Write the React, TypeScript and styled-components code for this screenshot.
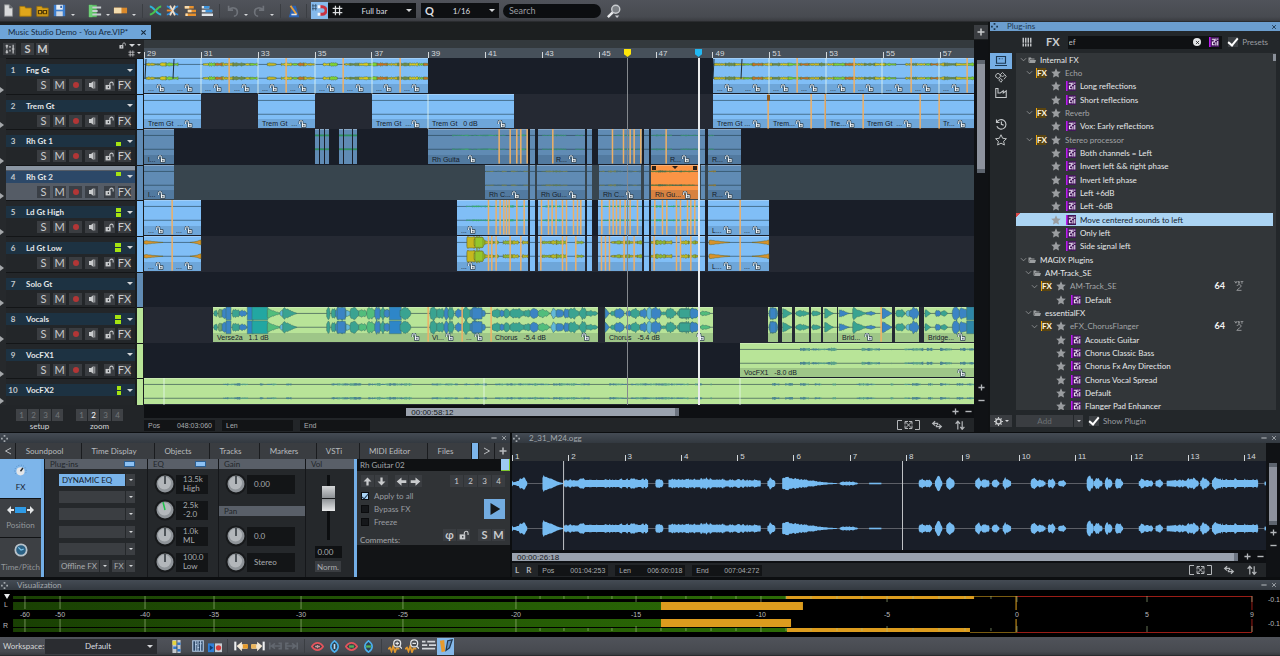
import React from "react";
import styled, { createGlobalStyle, css } from "styled-components";

const UI = `Lato, "Open Sans", sans-serif`;
const ARIAL = `"Liberation Sans", Arial, sans-serif`;

const Global = createGlobalStyle`
  * { box-sizing: border-box; }
  body { margin: 0; background: #17191c; font-family: ${UI}; font-size: 8px; line-height: 10px; color: #d4d6d8; }
  button, input, select, textarea { font: inherit; color: inherit; margin: 0; padding: 0; border: 0; background: none; border-radius: 0; outline: none; }
  ul, h2 { margin: 0; padding: 0; list-style: none; font-size: 8px; font-weight: 400; }
  svg { display: block; flex: none; }
`;

/* ---------- wave drawing ---------- */

type Shape = "o" | "d" | "g" | "b" | "n";
type Blob = [number, number, number, string, Shape?];

function noise(n: number) {
  const s = Math.sin(n * 127.1 + 11.7) * 43758.5453;
  return s - Math.floor(s);
}

function envelope(shape: Shape, t: number) {
  if (shape === "d") return Math.pow(1 - t, 1.2) * Math.min(1, 0.7 + t * 6) + 0.05;
  if (shape === "g") return Math.pow(t, 1.5) + 0.05;
  if (shape === "b") return 1;
  if (shape === "n") return 0.85;
  return Math.pow(Math.sin(Math.PI * Math.min(0.97, Math.max(0.06, Math.pow(t, 0.8)))), 0.5);
}

function blobPath(b: Blob, cy: number, step: number) {
  const [x0, x1, amp, , shape = "o"] = b;
  const count = Math.max(4, Math.round((x1 - x0) / step));
  const up: string[] = [];
  const down: string[] = [];
  for (let i = 0; i <= count; i++) {
    const x = x0 + ((x1 - x0) * i) / count;
    const rough = shape === "b" ? 1 : shape === "n" ? 0.45 + 0.7 * noise(x) : shape === "o" ? 0.6 + 0.5 * noise(x) : 0.75 + 0.3 * noise(x);
    const a = amp * envelope(shape, i / count) * rough;
    up.push(`${x.toFixed(1)} ${(cy - a).toFixed(1)}`);
    down.unshift(`${x.toFixed(1)} ${(cy + a).toFixed(1)}`);
  }
  return `M${up.join("L")}L${down.join("L")}Z`;
}

function Waves({ blobs, centres, step = 1, stroke }: { blobs: Blob[]; centres: number[]; step?: number; stroke?: string }) {
  return (
    <>
      {blobs.map((b, i) =>
        centres.map((c) => (
          <path key={`${i}-${c}`} d={blobPath(b, c, step)} fill={b[3]} stroke={stroke} strokeWidth={stroke ? 0.5 : 0} />
        ))
      )}
    </>
  );
}

/* ---------- icons ---------- */

const S = { fill: "none", stroke: "currentColor" } as const;

const icons: Record<string, React.ReactNode> = {
  file: <path d="M3 1h6l4 4v10H3z M9 1v4h4" fill="#d9dadb" stroke="#8a8c8f" />,
  folder: <path d="M1 3h6l1 2h7v10H1z" fill="#dfa61b" stroke="#a87a0c" />,
  folderRev: (
    <>
      <path d="M1 3h6l1 2h7v10H1z" fill="#d8a11a" stroke="#a0740a" />
      <path d="M3 8h4v4H3z M9 8h4v4H9z M7 10h2" fill="none" stroke="#4d3806" strokeWidth="1.4" />
    </>
  ),
  save: (
    <>
      <path d="M1 1h14v14H1z" fill="#3d7fd0" />
      <path d="M4 1h8v6H4z" fill="#e9edf2" />
      <path d="M4 9h8v6H4z" fill="#cdd6e2" />
      <path d="M9 2h2v3H9z" fill="#2a5ea6" />
    </>
  ),
  track: (
    <>
      <path d="M1 1h9v14H1z" fill="#54b85c" />
      <path d="M3 4h12M3 8h8M3 12h12" stroke="#c6ccd0" strokeWidth="2.4" />
      <path d="M1 1h4v14H1z" fill="#6ed076" />
    </>
  ),
  bar: (
    <>
      <path d="M1 5h14v6H1z" fill="#d9882a" />
      <path d="M1 5h8v6H1z" fill="#f3dcae" />
    </>
  ),
  cross: (
    <>
      <path d="M1 3c5 0 8 10 14 10" fill="none" stroke="#2fb3d8" strokeWidth="2.4" />
      <path d="M1 13c6 0 9-10 14-10" fill="none" stroke="#49c34f" strokeWidth="2.4" />
    </>
  ),
  crossCut: (
    <>
      <path d="M1 3c5 0 8 10 14 10 M1 13c6 0 9-10 14-10" fill="none" stroke="#2f8fe0" strokeWidth="2.2" />
      <path d="M5 2l6 12M11 2L5 14" stroke="#efdcc6" strokeWidth="2.2" />
      <path d="M1 8h6" stroke="#f08b2c" strokeWidth="2.2" />
    </>
  ),
  linesO: (
    <>
      <path d="M1 3h12M5 8h11M2 13h14" stroke="#e8912d" strokeWidth="3.6" />
      <path d="M1 3h6M5 8h5M2 13h3" stroke="#f6dcb0" strokeWidth="3.6" />
    </>
  ),
  linesB: (
    <>
      <path d="M1 3h10M1 8h14M1 13h15" stroke="#dfe4e8" strokeWidth="3.2" />
      <path d="M4 3h7M6 8h9" stroke="#3c94dd" strokeWidth="3.2" />
    </>
  ),
  undo: <path d="M3 2v5h5M3 7c3-4 10-3 10 2 0 3-2 5-4 5" {...S} stroke="#6f737a" strokeWidth="1.9" />,
  redo: <path d="M13 2v5H8M13 7C10 3 3 4 3 9c0 3 2 5 4 5" {...S} stroke="#6f737a" strokeWidth="1.9" />,
  metro: (
    <>
      <path d="M6 2h4l4 13H2z" fill="#2c63b4" />
      <path d="M4 2l7 10" stroke="#e7a03a" strokeWidth="2.2" />
      <path d="M5 12h6" stroke="#e3e6ea" strokeWidth="1.8" />
    </>
  ),
  magnet: (
    <>
      <path d="M8 4h3a4 4 0 0 1 0 8H8" fill="none" stroke="#c8313f" strokeWidth="3" />
      <path d="M6 4h3M6 12h3" stroke="#f4f6f8" strokeWidth="3" />
      <path d="M0 3h5M0 6h5M1 1v7M4 1v7" stroke="#38536e" strokeWidth="0.9" />
    </>
  ),
  hash: <path d="M5 1v14M11 1v14M1 5h14M1 11h14" {...S} strokeWidth="1.8" />,
  search: (
    <>
      <circle cx="10" cy="6" r="4.600" fill="#7c8085" stroke="#c9ccd0" strokeWidth="1.6" />
      <path d="M6.500 9.500L1 15" stroke="#e9ebed" strokeWidth="2.800" />
      <path d="M9 13h5l-2.500 3z" fill="#c9ccd0" />
    </>
  ),
  mixer: <path d="M3 1v6M3 9v6M8 3v3M8 9v3M13 1v14M1 3h4M1 13h4M11 8h4" {...S} strokeWidth="1.9" />,
  sliders: <path d="M2 1v14M6 1v14M10 1v14M14 1v14" {...S} strokeWidth="2.2" strokeDasharray="8 1.5 6" />,
  preset: (
    <>
      <path d="M0 0h16v16H0z" fill="#43175a" />
      <path d="M0 0h2.500v16H0z" fill="#bb1cf0" />
      <path d="M4.500 3.500h4v4.500h-3v4.500h3.500M11 2.500v4M11 8.500v5M14 2.500v2M14 6.500v7" stroke="#f0e4f6" strokeWidth="1.700" fill="none" />
    </>
  ),
  laptop: <path d="M2 2h12v9H2zM0 14h16M5 5h2M9 5h1" {...S} strokeWidth="1.5" />,
  cubes: <path d="M1 5l3-2 3 2v3l-3 2-3-2zM7 5l3-3 3 3-3 3zM5 12l2-2 3 2-2 3zM13 5l2 2-3 4" {...S} strokeWidth="1.2" />,
  factory: <path d="M1 2v12h14V5l-4 3V5L7 8H4V2z" {...S} strokeWidth="1.4" />,
  clock: <path d="M2 2v4h4M2.500 6a6.300 6.300 0 1 1 0 5M8.500 4.500v4l3 1" {...S} strokeWidth="1.500" />,
  starO: <path d="M8 1l2.200 4.700 5 .6-3.700 3.400 1 5L8 12.200 3.500 14.700l1-5L.8 6.300l5-.6z" {...S} strokeWidth="1.3" />,
  star: <path d="M8 .5l2.300 4.900 5.400.6-4 3.700 1.100 5.500L8 12.600 3.200 15.200l1.100-5.500L.3 6l5.400-.6z" fill="#9a9da0" />,
  chevron: <path d="M2 5l6 6 6-6" {...S} strokeWidth="1.8" />,
  dir: <path d="M1 3h5l1 2h6v2H4L1 14zM4 8h12l-2 6H2z" fill="#9b9ea0" />,
  gear: (
    <>
      <circle cx="8" cy="8" r="4.500" {...S} strokeWidth="2.6" />
      <path d="M8 0v3M8 13v3M0 8h3M13 8h3M2.500 2.500l2 2M11.500 11.500l2 2M13.500 2.500l-2 2M4.500 11.500l-2 2" {...S} strokeWidth="2" />
    </>
  ),
  vst: <path d="M1 0l2 3.500L5 0M9 .5H6.500V2H9v1.500H6.500M10.500 .5H15M12.700 .5v4M4.500 8c1-3 7-3 7 0 0 2-5 4-7 7h7.500" {...S} strokeWidth="1.300" />,
  speaker: (
    <>
      <path d="M2 4h4v8H2zM6 4l5-4v16l-5-4z" fill="currentColor" />
      <path d="M13.500 1v14" {...S} strokeWidth="1.6" />
    </>
  ),
  lock: (
    <>
      <path d="M1 7h9v8H1z" fill="currentColor" />
      <path d="M8.500 7V5a3 3 0 0 1 6 0v3" {...S} strokeWidth="1.8" />
      <path d="M5 9.500h2v3H5z" fill="#34383c" />
    </>
  ),
  clipLock: (
    <>
      <path d="M2 8V4.500a3 3 0 0 1 6 0V8" fill="none" stroke="#33495a" strokeWidth="3.800" />
      <path d="M6 7h9v8H6z" fill="#f2f7fa" stroke="#2a3c4a" strokeWidth="1.500" />
      <path d="M2 8V4.500a3 3 0 0 1 6 0V8" fill="none" stroke="#f2f7fa" strokeWidth="1.800" />
      <path d="M9.500 9.500h2.500V13H9.500z" fill="#2a3c4a" />
    </>
  ),
  grip: <path d="M6 0h4v4H6zM6 12h4v4H6zM0 6h4v4H0zM12 6h4v4h-4z" fill="currentColor" />,
  plus: <path d="M8 1v14M1 8h14" {...S} strokeWidth="3" />,
  minus: <path d="M1 8h14" {...S} strokeWidth="3.200" />,
  close: <path d="M3 3l10 10M13 3L3 13" {...S} strokeWidth="2.400" />,
  less: <path d="M14 2L3 8l11 6" {...S} strokeWidth="2" />,
  more: <path d="M2 2l11 6-11 6" {...S} strokeWidth="2" />,
  up: <path d="M8 1l7 7h-5v7H6V8H1z" fill="currentColor" />,
  down: <path d="M8 15l7-7h-5V1H6v7H1z" fill="currentColor" />,
  left: <path d="M1 8l7-6v4h7v4H8v4z" fill="currentColor" />,
  right: <path d="M15 8L8 2v4H1v4h7v4z" fill="currentColor" />,
  play: <path d="M2 0l13 8-13 8z" fill="#15181b" />,
  fitH: <path d="M5 2L1 5.500 5 9M1 5.500h8v3M11 7l4 3.500-4 3.500M15 10.500H7v-3" {...S} strokeWidth="1.900" />,
  fitV: <path d="M1 6l3.500-4L8 6M4.500 2v13M8.500 11l3 4 3.500-4M11.500 15V2" {...S} strokeWidth="1.900" />,
  pitch: (
    <>
      <circle cx="8" cy="8" r="6.500" fill="#2b6184" stroke="#b9c3cb" strokeWidth="2" />
      <path d="M5 5l3 3 3-1" stroke="#79c0e8" fill="none" strokeWidth="1.4" />
    </>
  ),
  fxKnob: (
    <>
      <circle cx="8" cy="9" r="5" fill="#e3e5e7" />
      <path d="M8 9l3-4" stroke="#22272b" strokeWidth="1.800" />
      <path d="M2 12A7 7 0 1 1 14 12" fill="none" stroke="#4a7fb4" strokeDasharray="1 2" />
    </>
  ),
  wsA: (
    <>
      <path d="M3 0h10v16H3z" fill="#c2c7cc" />
      <path d="M3 1h5v5H3z" fill="#e7d63d" />
      <path d="M4 8h5v3H4zM9 3h4v3H9zM9 11h4v3H9z" fill="#2f79cf" />
      <path d="M8.500 0v16" stroke="#3c4248" />
    </>
  ),
  wsB: <path d="M1 1h14v14H1zM5 1v14M8 1v14M11.500 1v14M4 6h2.500M7 10h2.500M10 5h3" fill="#2b4564" stroke="#b4cbe6" strokeWidth="1.5" />,
  wsC: (
    <>
      <path d="M0 5h7v10H0z" fill="#2f7fd8" />
      <path d="M8 5h8v10H8z" fill="#c7ccd2" />
      <path d="M2 7l4 3-4 3z" fill="#0e3b70" />
      <circle cx="12" cy="10" r="3" fill="#d83a3a" />
    </>
  ),
  prev: (
    <>
      <path d="M1.500 3v10" stroke="#eceef0" strokeWidth="2.400" />
      <path d="M3 8l6-5v3h6v5H9v3z" fill="#f3e9d6" />
      <path d="M10 6h6v5h-6z" fill="#e39a2c" />
    </>
  ),
  next: (
    <>
      <path d="M14.500 3v10" stroke="#eceef0" strokeWidth="2.400" />
      <path d="M13 8L7 3v3H1v5h6v3z" fill="#f3e9d6" />
      <path d="M0 6h6v5H0z" fill="#e9b45c" />
    </>
  ),
  prevOff: <path d="M2 4v8M4 8h11M8 5L4 8l4 3M12 5h3v6h-3" stroke="#62676f" strokeWidth="1.800" fill="none" />,
  nextOff: <path d="M14 4v8M12 8H1M8 5l4 3-4 3M4 5H1v6h3" stroke="#62676f" strokeWidth="1.800" fill="none" />,
  eyeR: (
    <>
      <path d="M1 8c4-6 10-6 14 0-4 6-10 6-14 0z" fill="#3d4147" stroke="#e4545c" strokeWidth="2" />
      <path d="M5 8h6M8 6v4" stroke="#c9969a" strokeWidth="1.600" />
    </>
  ),
  eyeB: (
    <>
      <path d="M8 1c6 4 6 10 0 14C2 11 2 5 8 1z" fill="#2e3f4e" stroke="#4bb0ee" strokeWidth="2" />
      <path d="M8 5v6" stroke="#bfe1f6" strokeWidth="2" />
    </>
  ),
  eyeRG: (
    <>
      <path d="M1 8c4-6 10-6 14 0-4 6-10 6-14 0z" fill="#3d4147" stroke="#e4545c" strokeWidth="2" />
      <path d="M5 8h6" stroke="#54b35a" strokeWidth="2.800" />
    </>
  ),
  eyeBG: (
    <>
      <path d="M8 1c6 4 6 10 0 14C2 11 2 5 8 1z" fill="#2e3f4e" stroke="#4bb0ee" strokeWidth="2" />
      <path d="M5 8h6" stroke="#54b35a" strokeWidth="2.800" />
    </>
  ),
  zoomIn: (
    <>
      <path d="M0 11h2V9l2 5 2-6 2 7 2-5v1h3" stroke="#e0982f" strokeWidth="1.900" fill="none" />
      <circle cx="10.500" cy="5" r="4" fill="#4a4d53" stroke="#e4e6e8" strokeWidth="1.400" />
      <path d="M8.500 5h4M10.500 3v4M13 8l3 3" stroke="#e4e6e8" strokeWidth="1.300" />
    </>
  ),
  zoomOut: (
    <>
      <path d="M0 11h2V9l2 5 2-6 2 7 2-5v1h3" stroke="#e0982f" strokeWidth="1.900" fill="none" />
      <circle cx="10.500" cy="5" r="4" fill="#4a4d53" stroke="#e4e6e8" strokeWidth="1.400" />
      <path d="M8.500 5h4M13 8l3 3" stroke="#e4e6e8" strokeWidth="1.300" />
    </>
  ),
  rows: <path d="M0 3h4M6 3h9M0 7h6M8 7h8M0 11h15" stroke="#d2d5d8" strokeWidth="1.800" />,
  wsOn: (
    <>
      <path d="M1 2l5-1 1 13-4 1z" fill="#e79a2c" />
      <path d="M8 13l2-11 5-1-3 9z" fill="#5f8fc4" stroke="#21384f" strokeWidth="1.400" />
    </>
  ),
};

function Ico({ name, w = 14, h }: { name: string; w?: number; h?: number }) {
  return (
    <svg width={w} height={h ?? w} viewBox="0 0 16 16" aria-hidden="true">
      {icons[name]}
    </svg>
  );
}

const Bracket = () => (
  <svg width="23" height="10" viewBox="0 0 23 10" fill="none" stroke="#b4b7ba" aria-hidden="true">
    <path d="M5 .5H.5v9H5M18 .5h4.500v9H18" />
    <path d="M8.500 2l6 6M14.500 2l-6 6M8 4.500v-3h3M12 1.500h3v3M15 5.500v3h-3M11 8.500H8v-3" />
  </svg>
);

const Caret = styled.span<{ $c?: string }>`
  width: 0;
  height: 0;
  flex: none;
  border: 3px solid transparent;
  border-top-color: ${(p) => p.$c ?? "#d5d7d9"};
  border-bottom: 0;
`;
const SmallCaret = styled(Caret)`
  border-width: 2px;
  border-bottom: 0;
`;

/* ---------- shell ---------- */

const Page = styled.div`
  min-height: 100vh;
  display: flex;
  flex-direction: column;
  overflow: hidden;
`;
const Toolbar = styled.header`
  height: 22px;
  flex: none;
  display: flex;
  align-items: center;
  background: linear-gradient(#50535a, #474a50 80%, #3a3c41);
  border-bottom: 1px solid #2a2c2f;
`;
const ToolButton = styled.button<{ $on?: boolean; $narrow?: boolean }>`
  width: ${(p) => (p.$narrow ? 9 : 17)}px;
  height: 17px;
  flex: none;
  display: flex;
  align-items: center;
  justify-content: center;
  background: ${(p) => (p.$on ? "#85b9ea" : "none")};
  ${(p) => p.$narrow && css`padding-top: 8px;`}
`;
const Sep = styled.span<{ $blank?: boolean }>`
  width: 1px;
  height: 14px;
  margin: 0 4px;
  flex: none;
  background: ${(p) => (p.$blank ? "none" : "#3b3e43")};
`;
const Combo = styled.label<{ $w: number; $flat?: boolean }>`
  width: ${(p) => p.$w}px;
  height: 15px;
  flex: none;
  display: flex;
  align-items: center;
  padding: 0 4px;
  background: ${(p) => (p.$flat ? "#2a2c30" : "#0e1012")};
  color: #dcdee0;
  select {
    flex: 1;
    min-width: 0;
    appearance: none;
    text-align: center;
    text-align-last: center;
  }
`;
const SearchBox = styled.input`
  width: 98px;
  height: 14px;
  flex: none;
  margin: 0 4px;
  padding: 0 6px;
  border-radius: 7px;
  background: #0c0e10;
  font-size: 9px;
  &::placeholder { color: #9a9da0; opacity: 1; }
`;
const Big = styled.b`
  font-size: 11px;
  line-height: 12px;
`;

const Main = styled.main`
  flex: 1;
  display: flex;
  gap: 2px;
  background: #0f1113;
`;

/* ---------- arranger ---------- */

const Arranger = styled.section`
  flex: 1;
  min-width: 0;
  display: flex;
  flex-direction: column;
  background: #1f2225;
`;
const ProjectTabs = styled.div`
  height: 18px;
  display: flex;
  align-items: center;
  justify-content: space-between;
  padding-top: 2px;
  background: #1c1f20;
`;
const ProjectTab = styled.button`
  height: 14px;
  width: 151px;
  padding: 0 4px 0 8px;
  display: flex;
  align-items: center;
  justify-content: space-between;
  background: #6ea5d8;
  color: #14273a;
`;
const Square = styled.button<{ $bg?: string; $w?: number; $h?: number; $c?: string }>`
  width: ${(p) => p.$w ?? 13}px;
  height: ${(p) => p.$h ?? 12}px;
  flex: none;
  display: flex;
  align-items: center;
  justify-content: center;
  background: ${(p) => p.$bg ?? "#3a3d41"};
  color: ${(p) => p.$c ?? "#c9cbcd"};
`;
const ArrangerBody = styled.div`
  flex: 1;
  display: flex;
`;
const TrackColumn = styled.div`
  width: 144px;
  flex: none;
  display: flex;
  flex-direction: column;
`;
const TrackTop = styled.div`
  height: 18px;
  display: flex;
  align-items: center;
  gap: 2px;
  padding: 0 2px 0 3px;
  background: #232629;
`;
const TopMenus = styled.div`
  margin-left: auto;
  display: grid;
  grid-template-columns: 9px 9px 6px;
  align-items: center;
  justify-items: center;
  row-gap: 1px;
  color: #c9cbcd;
`;
const rowGrid = css`
  flex: 1;
  display: grid;
  grid-template-rows: repeat(9, 4fr) 3fr;
`;
const TrackGrid = styled.div`${rowGrid}`;
const Track = styled.div`
  min-height: 0;
  overflow: hidden;
  display: flex;
  background: #1a1d1f;
`;
const Fold = styled.button`
  width: 6px;
  flex: none;
  display: flex;
  align-items: flex-end;
  padding-bottom: 1px;
  background: #26292c;
  &::after {
    content: "";
    border: 3px solid transparent;
    border-left: 4px solid #a4a7aa;
    border-right: 0;
  }
`;
const TrackPanel = styled.div<{ $sel?: boolean }>`
  flex: 1;
  padding-top: 5px;
  background: ${(p) => (p.$sel ? "linear-gradient(#8b96a3 4px, #555c66 4px)" : "#232629")};
  border-top: 1px solid #131517;
`;
const TrackName = styled.div<{ $sel?: boolean }>`
  height: 12px;
  display: flex;
  align-items: center;
  gap: 6px;
  padding-right: 2px;
  background: ${(p) => (p.$sel ? "#2c4868" : "#1d3242")};
  font-weight: 700;
  color: #e3e6e8;
  i {
    width: 14px;
    text-align: center;
    font-style: normal;
    color: #c3c8cc;
  }
`;
const Led = styled.span<{ $w: number }>`
  margin-left: auto;
  width: ${(p) => p.$w}px;
  display: grid;
  gap: 1px;
  span { height: 4px; background: #a5e312; }
  span[data-off] { background: none; }
`;
const TrackButtons = styled.div`
  display: flex;
  align-items: center;
  gap: 3px;
  padding: 3px 0 0 31px;
`;
const TrackBtn = styled(Square)`
  font-size: 11px;
  line-height: 12px;
  &:nth-of-type(5) { margin-left: 3px; }
`;
const Rec = styled.span`
  width: 6px;
  height: 6px;
  border-radius: 50%;
  background: #b23636;
`;
const Strip = styled.span<{ $c: string }>`
  width: 6px;
  margin: 0 1px 0 2px;
  background: ${(p) => p.$c};
  border-top: 1px solid #131517;
`;
const TrackFooter = styled.div`
  height: 27px;
  padding: 4px 0 0 16px;
  display: flex;
  gap: 13px;
  background: #222528;
  text-align: center;
`;
const PageSet = styled.div`
  line-height: 8px;
  div { display: flex; gap: 1px; padding-bottom: 1px; }
`;
const PageBtn = styled(Square)<{ $on?: boolean }>`
  color: ${(p) => (p.$on ? "#fff" : "#73777b")};
  background: #3f4246;
`;

const Timeline = styled.div`
  flex: 1;
  min-width: 0;
  display: flex;
  flex-direction: column;
`;
const Ruler = styled.div<{ $bg: string }>`
  position: relative;
  height: 18px;
  display: flex;
  align-items: flex-end;
  overflow: hidden;
  background: ${(p) => p.$bg};
  font: 8px/8px ${ARIAL};
  color: #d3d7da;
`;
const Tick = styled.span`
  flex: none;
  height: 9px;
  display: flex;
  align-items: center;
  gap: 2px;
  &::before { content: ""; width: 1px; height: 6px; margin-top: 2px; background: #d3d7da; }
`;
const Lanes = styled.div`
  ${rowGrid}
  position: relative;
  overflow: hidden;
`;
const Lane = styled.div<{ $bg: string }>`
  position: relative;
  min-height: 0;
  overflow: hidden;
  background: ${(p) => p.$bg};
  > svg { position: absolute; inset: 0; width: 100%; height: 100%; }
`;
const ClipBox = styled.div<{ $c: string }>`
  position: absolute;
  top: 0;
  bottom: 1px;
  display: flex;
  align-items: flex-end;
  overflow: hidden;
  background: ${(p) => p.$c};
  border-top: 1px solid rgba(255, 255, 255, 0.25);
`;
const ClipFoot = styled.div`
  flex: 1;
  min-width: 0;
  height: 9px;
  display: flex;
  align-items: center;
  justify-content: space-between;
  padding: 0 8px 0 4px;
  background: rgba(0, 20, 40, 0.14);
  font: 7px/9px ${ARIAL};
  color: #16202a;
  white-space: pre;
  overflow: hidden;
`;
const Playhead = styled.span<{ $w: number; $c: string }>`
  position: absolute;
  top: 0;
  bottom: 0;
  width: ${(p) => p.$w}px;
  background: ${(p) => p.$c};
`;
const Marker = styled.span<{ $c: string }>`
  position: absolute;
  bottom: 1px;
  width: 7px;
  height: 8px;
  background: ${(p) => p.$c};
  clip-path: polygon(0 0, 100% 0, 100% 65%, 50% 100%, 0 65%);
`;
const ScrollRow = styled.div`
  height: 13px;
  display: flex;
  align-items: center;
  background: #0e1013;
`;
const Thumb = styled.div<{ $w: string; $ml?: string }>`
  width: ${(p) => p.$w};
  margin-left: ${(p) => p.$ml ?? 0};
  height: 8px;
  padding-left: 5px;
  background: #9aa2ae;
  border-right: 4px solid #6c7480;
  font: 8px/9px ${ARIAL};
  color: #14181c;
`;
const StatusRow = styled.div`
  height: 14px;
  display: flex;
  align-items: center;
  gap: 7px;
  background: #222528;
  color: #a9acaf;
`;
const Field = styled.span<{ $w: number }>`
  width: ${(p) => p.$w}px;
  height: 11px;
  display: flex;
  align-items: center;
  justify-content: space-between;
  padding: 0 3px 0 4px;
  background: #121416;
  font: 7px/11px ${ARIAL};
`;
const Push = styled.span<{ $gap?: number; $pr?: number }>`
  margin-left: auto;
  display: flex;
  align-items: center;
  gap: ${(p) => p.$gap ?? 0}px;
  padding-right: ${(p) => p.$pr ?? 8}px;
  color: #b4b7ba;
`;
const VScroll = styled.div<{ $top: number }>`
  width: 14px;
  flex: none;
  display: flex;
  flex-direction: column;
  align-items: center;
  padding-top: ${(p) => p.$top}px;
  background: #101215;
  color: #b4b7ba;
`;
const VThumb = styled.div<{ $h: number }>`
  width: 8px;
  height: ${(p) => p.$h}px;
  margin-bottom: auto;
  background: #8d929d;
  border: solid #5d646e;
  border-width: 4px 0;
`;
const VZoom = styled.div`
  display: grid;
  gap: 6px;
  padding-bottom: 28px;
`;

/* Timeline coordinates: 830 units wide, starting at 144. */
const T0 = 144;
const TW = 830;
const pct = (v: number) => `${(v / TW) * 100}%`;

const BLUE = "#80bef6";
const MUTED = "#608bb4";
const GREEN = "#b8e498";
const CUT = "#eeb066";

type ClipDef = [number, number, string?, string?];
interface LaneDef {
  name: string;
  colour: string;
  led?: [number, number, number];
  clips: ClipDef[];
  cuts?: number[];
  seams?: number[];
  blobs?: Blob[];
  outline?: string;
}

const TEAL = "#3aa391";
const SEA = "#3b84c4";
const LIME = "#52bd7c";
const SKY = "#62b8d8";

const third = (o: number, list: Blob[]): Blob[] => list.map(([a, b, ...r]) => [o + a / 3, o + b / 3, ...r] as Blob);
const cuts = (list: number[]) => list.map((v) => 420 + v / 3);

function beads(from: number, to: number, size: number, amp: number, colours: string[]): Blob[] {
  const out: Blob[] = [];
  for (let x = from, i = 0; x < to; i++) {
    const w = size * (0.6 + noise(x));
    if (noise(x * 3) > 0.18) out.push([x, Math.min(to, x + w), amp * (0.6 + 0.5 * noise(x * 7)), colours[i % colours.length], "n"]);
    x += w;
  }
  return out;
}
const spans = (o: number, list: number[][], size: number, amp: number, colours: string[]) =>
  list.flatMap(([a, b]) => beads(o + a / 3, o + b / 3, size, amp, colours));

const fng = ["#c9b51f", "#6e8c4a", "#d8c81c", "#7fd332", "#c9721f"];
const HAZE = ["#4a8490", "#5aa08a"];

const lanes: LaneDef[] = [
  {
    name: "Fng Gt",
    colour: BLUE,
    clips: [
      ...[144, 173, 201, 230, 258, 286, 315, 343, 372, 400].map((x, i, a) => [x, a[i + 1] ?? 428, "..."] as ClipDef),
      ...[713, 741, 769, 797, 826, 854, 882, 911, 939].map((x, i, a) => [x, a[i + 1] ?? 968, "..."] as ClipDef),
      [968, 974, " "],
    ],
    cuts: [229, 286, 343, 400, 797, 854, 911, 967],
    seams: [201, 258, 315, 372, 769, 826, 882, 939],
    blobs: [...beads(146, 428, 8, 1.8, fng), ...beads(714, 974, 8, 1.8, fng)],
    outline: "#4f6e3e",
  },
  {
    name: "Trem Gt",
    colour: BLUE,
    clips: [
      [144, 201, "Trem Gt  ..."],
      [258, 315, "Trem Gt  ..."],
      [372, 428, "Trem Gt  ..."],
      [428, 514, "Trem Gt   0 dB"],
      [713, 769, "Trem Gt ..."],
      [769, 811, "Trem..."],
      [811, 825, " "],
      [826, 863, "Tre..."],
      [863, 920, "Trem Gt  ..."],
      [920, 939, " "],
      [939, 974, "Tr..."],
    ],
    cuts: [768, 811, 825, 863, 920, 939],
    seams: [428],
  },
  {
    name: "Rh Gt 1",
    colour: MUTED,
    led: [5, 0, 1],
    clips: [
      [144, 174, "l..."],
      ...[315, 320, 325, 339, 344, 348, 353].map((x) => [x, x + 4] as ClipDef),
      [428, 484, "Rh Guita"],
      [484, 528, " "],
      [530, 535],
      [538, 552, " "],
      [552, 585, "R..."],
      [587, 592],
      [598, 642, " "],
      [644, 649],
      [651, 666, " "],
      [666, 698, "R..."],
      [700, 705],
      [708, 741, "R..."],
    ],
    cuts: cuts([237, 270, 290, 302, 321, 398, 577, 610, 630, 642, 662, 738]),
    blobs: [
      ...beads(452, 528, 6, 1.1, ["#3c8a78", "#3f9f74"]),
      ...beads(538, 585, 6, 1, ["#3c8a78"]),
      ...beads(598, 642, 6, 1, ["#3c8a78"]),
      ...beads(651, 698, 6, 1, ["#3c8a78"]),
      ...beads(709, 714, 3, 1, ["#3c8a78"]),
      ...[315, 320, 325, 339, 344, 348, 353].map((x) => [x, x + 4, 0.9, "#2f8f5e", "b"] as Blob),
    ],
  },
  {
    name: "Rh Gt 2",
    colour: MUTED,
    led: [5, 1, 0],
    clips: [
      [144, 174, "l..."],
      [485, 528, "Rh C..."],
      [530, 535],
      [537, 585, "Rh Gu..."],
      [587, 592],
      [599, 641, "Rh C..."],
      [644, 649],
      [651, 699, "Rh Gu...", "#fb9445"],
      [701, 705],
      [708, 741, "R..."],
    ],
    blobs: [
      ...beads(486, 528, 5, 1, ["#6d7f5c", "#4a6f7c"]),
      ...beads(538, 585, 5, 1, ["#6d7f5c", "#5d7a58"]),
      ...beads(600, 641, 5, 1, ["#6d7f5c", "#4a6f7c"]),
      ...beads(651, 698, 8, 1.2, ["#6b7a3a", "#4e6f4a"]),
      ...beads(709, 716, 4, 1, ["#8a7a3a"]),
    ],
  },
  {
    name: "Ld Gt High",
    colour: BLUE,
    led: [5, 1, 1],
    clips: [
      [144, 172, "..."],
      [172, 201, "..."],
      [457, 484, "..."],
      [484, 528, " "],
      [530, 535],
      [538, 585, " "],
      [587, 592],
      [598, 642, " "],
      [644, 649],
      [651, 698, " "],
      [700, 705],
      [708, 740, "L..."],
      [740, 769, "..."],
    ],
    cuts: [
      172,
      ...cuts([205, 228, 240, 251, 259, 267, 290, 312, 364, 385, 396, 408, 427, 439, 460, 472, 482, 545, 568, 579, 589, 600, 615, 630, 652, 704, 727, 740, 769, 781, 802, 812, 824]),
      740,
    ],
    blobs: [
      ...beads(466, 528, 5, 1.1, ["#3f9c8c", "#39a870"]),
      ...beads(538, 585, 5, 1.1, ["#3f9c8c", "#39a870"]),
      ...beads(598, 642, 5, 1.1, ["#3f9c8c", "#39a870"]),
      ...beads(651, 698, 5, 1.1, ["#3f9c8c", "#39a870"]),
    ],
  },
  {
    name: "Ld Gt Low",
    colour: BLUE,
    led: [6, 1, 1],
    clips: [
      [144, 172, "..."],
      [172, 201, "..."],
      [457, 484, "..."],
      [484, 528, " "],
      [530, 535],
      [538, 585, " "],
      [587, 592],
      [598, 642, " "],
      [644, 649],
      [651, 698, " "],
      [700, 705],
      [708, 740, "L..."],
      [740, 769, "..."],
    ],
    cuts: [172, ...cuts([205, 215, 228, 270, 302, 362, 427, 439, 467, 544, 556, 568, 612, 642, 702, 769, 781, 812]), 740],
    blobs: [
      [144, 163, 2, "#d8922a", "d"],
      [190, 201, 2.4, "#d8922a", "g"],
      [467, 475, 6.8, "#c6b81e", "n"],
      [467, 475, 5.5, "#c6b81e", "b"],
      [474, 485, 7, "#93c62c"],
      [475, 483, 5, "#93c62c", "b"],
      ...beads(485, 528, 6, 2.2, ["#b8b824", "#8fb52e"]),
      ...beads(538, 585, 6, 2.2, ["#b8b824", "#8fb52e"]),
      ...beads(598, 642, 6, 2.2, ["#b8b824", "#8fb52e"]),
      ...beads(651, 698, 6, 2.2, ["#b8b824", "#8fb52e"]),
      [709, 730, 2.6, "#d8922a", "d"],
      [752, 769, 2.4, "#d8922a", "g"],
    ],
    outline: "#6d6a25",
  },
  { name: "Solo Gt", colour: MUTED, clips: [] },
  {
    name: "Vocals",
    colour: GREEN,
    led: [6, 1, 1],
    clips: [
      [213, 428, "Verse2a   1.1 dB"],
      [428, 462, "Vi..."],
      [462, 491, "..."],
      [491, 598, "Chorus   -5.4 dB"],
      [605, 713, "Chorus   -5.4 dB"],
      [768, 778, " "],
      [782, 792, " "],
      [795, 809, " "],
      [811, 821, " "],
      [823, 837, " "],
      [838, 881, "Brid..."],
      [881, 892, " "],
      [895, 919, " "],
      [924, 974, "Bridge..."],
    ],
    cuts: [428, 462, 491, 881],
    blobs: [
      ...third(0, [
        [642, 652, 4, TEAL], [655, 668, 5.5, "#6fa36a"], [666, 682, 6.8, SEA], [678, 693, 6.5, SEA, "b"], [697, 720, 5, TEAL], [718, 740, 4, SEA],
        [742, 760, 6.5, "#2e86c8", "b"], [756, 803, 6.5, "#22a7a2", "b"], [802, 845, 5, LIME, "d"], [840, 856, 3, SKY], [848, 890, 7, TEAL, "d"],
        [980, 990, 6.8, TEAL], [994, 1010, 5, TEAL], [1006, 1042, 7, SEA], [1012, 1036, 6, SEA, "b"], [1038, 1052, 4, SKY], [1050, 1078, 6.5, TEAL], [1076, 1100, 4.5, LIME],
        [1100, 1128, 6.5, LIME], [1124, 1143, 6.8, SEA], [1140, 1158, 6.5, TEAL], [1152, 1170, 5, SEA], [1168, 1204, 6.5, "#2e86c8", "b"], [1200, 1232, 7, TEAL],
      ]),
      ...third(420, [
        [30, 52, 6.8, TEAL], [50, 76, 5.5, TEAL], [72, 90, 6.8, SEA], [84, 102, 6.8, TEAL], [106, 130, 5.5, SEA], [128, 157, 6.8, TEAL], [150, 196, 6.8, SEA], [156, 186, 5.6, SEA, "b"],
        [216, 246, 4.5, TEAL], [240, 256, 4, SEA], [252, 270, 4.5, TEAL], [270, 314, 5.5, TEAL], [312, 336, 4, TEAL], [330, 358, 5.5, SEA], [354, 388, 4, LIME],
        [393, 412, 5, SKY], [408, 432, 5, SEA], [432, 452, 6, SEA], [446, 478, 5.5, TEAL], [478, 502, 6, TEAL], [498, 532, 3, TEAL],
        [555, 568, 6.8, SEA, "d"], [572, 592, 3, TEAL], [584, 612, 6, SEA], [618, 636, 3, SEA], [632, 659, 6, TEAL], [660, 684, 5, SEA], [680, 699, 6.8, SKY],
        [694, 724, 6.8, SEA], [722, 740, 2, TEAL], [738, 768, 5.5, TEAL], [772, 838, 6, TEAL], [778, 830, 4.2, TEAL, "b"], [810, 838, 6, SEA], [840, 870, 2.5, LIME],
        [1047, 1073, 7, SEA], [1050, 1068, 5.4, SEA, "b"], [1088, 1116, 6, TEAL, "d"], [1128, 1166, 3, TEAL], [1176, 1200, 3, TEAL], [1214, 1240, 6, TEAL, "d"],
      ]),
      ...third(700, [
        [418, 448, 4.5, SEA, "d"], [458, 500, 6.5, TEAL, "d"], [498, 526, 2, SEA], [546, 576, 7, SEA, "d"], [588, 614, 4.5, TEAL], [618, 634, 4, SKY],
        [628, 657, 6.5, SEA], [675, 692, 4.5, TEAL, "d"], [706, 722, 3.5, SEA], [722, 742, 3, TEAL], [757, 782, 6.8, SEA], [778, 804, 6, SEA], [800, 822, 6.5, "#2e86a8", "b"],
      ]),
    ],
    outline: "#3f6d63",
  },
  {
    name: "VocFX1",
    colour: GREEN,
    clips: [[740, 974, "VocFX1   -8.0 dB"]],
    blobs: spans(700, [[300, 330], [335, 410], [428, 540], [560, 575], [598, 670], [680, 700], [720, 755], [780, 822]], 5, 1.8, HAZE),
  },
  {
    name: "VocFX2",
    colour: GREEN,
    led: [4, 1, 1],
    clips: [[144, 974]],
    seams: [164, 484, 740],
    blobs: [
      ...spans(0, [[670, 830], [858, 885], [995, 1085], [1105, 1235]], 5, 1.4, HAZE),
      ...spans(420, [[35, 200], [225, 390], [400, 540], [568, 625], [632, 830], [832, 875]], 5, 1.4, HAZE),
      ...spans(700, [[216, 238], [256, 280], [300, 326], [344, 364], [384, 408], [428, 452], [470, 526], [558, 580], [598, 630], [636, 662], [684, 698], [720, 748], [770, 822]], 5, 1.5, HAZE),
    ],
  },
];

function TrackRow({ lane, index }: { lane: LaneDef; index: number }) {
  const sel = index === 3;
  const bg = sel ? "#3a3f46" : undefined;
  return (
    <Track>
      <Fold aria-label={`Fold ${lane.name}`} />
      <TrackPanel $sel={sel}>
        <TrackName $sel={sel}>
          <i>{index + 1}</i>
          {lane.name}
          {lane.led && (
            <Led $w={lane.led[0]}>
              <span data-off={lane.led[1] ? undefined : ""} />
              <span data-off={lane.led[2] ? undefined : ""} />
            </Led>
          )}
          {!lane.led && <Gap />}
          <Caret />
        </TrackName>
        {index < 9 && (
          <TrackButtons>
            <TrackBtn $bg={bg}>S</TrackBtn>
            <TrackBtn $bg={bg}>M</TrackBtn>
            <TrackBtn $bg={bg} aria-label="Record"><Rec /></TrackBtn>
            <TrackBtn $bg={bg} aria-label="Monitor"><Ico name="speaker" w={8} /></TrackBtn>
            <TrackBtn $bg={bg} aria-label="Lock" $w={11}><Ico name="lock" w={9} /></TrackBtn>
            <TrackBtn $bg={bg}>FX</TrackBtn>
          </TrackButtons>
        )}
      </TrackPanel>
      <Strip $c={lane.colour} />
    </Track>
  );
}

function LaneRow({ lane, index }: { lane: LaneDef; index: number }) {
  const bg = index === 3 ? "#38454e" : index % 2 ? "#252933" : "#191e28";
  return (
    <Lane $bg={bg}>
      {lane.clips.map(([a, b, label, colour], i) => (
        <ClipBox key={i} $c={colour ?? lane.colour} style={{ left: pct(a - T0), width: pct(b - a) }}>
          {label && (
            <ClipFoot>
              <span>{label}</span>
              {label !== " " && <Ico name="clipLock" w={9} h={8} />}
            </ClipFoot>
          )}
        </ClipBox>
      ))}
      <svg viewBox={`${T0} 0 ${TW} ${index === 9 ? 27 : 36}`} preserveAspectRatio="none" aria-hidden="true">
        {lane.clips.map(([a, b], i) => (
          <path key={i} d={`M${a} 6.500H${b}M${a} 20.500H${b}`} stroke="#1f3a48" strokeOpacity="0.65" strokeWidth="0.9" />
        ))}
        <Waves blobs={lane.blobs ?? []} centres={[6.5, 20.5]} stroke={lane.outline} />
        {lane.seams?.map((x) => <rect key={x} x={x - 0.5} y="0" width="1" height="36" fill="#e6f6ee" opacity="0.8" />)}
        {lane.cuts?.map((x) => <rect key={x} x={x - 0.6} y="0" width="1.500" height="35" fill={CUT} />)}
        {index === 0 && <path d="M146 1l-1 20M174 1l-1 20M714 1l-1 20M742 1l-1 20" stroke="#1c2a36" />}
        {index === 1 && <path d="M767 1h3v6h-3z" fill="#8a5a24" />}
        {index === 3 && <path d="M652 1h4v4h-4zM693 1h4v4h-4zM672 1h6l-3 3z" fill="#2a2018" />}
      </svg>
    </Lane>
  );
}

/* ---------- plug-in browser ---------- */

const Browser = styled.aside`
  width: 290px;
  flex: none;
  display: flex;
  flex-direction: column;
  background: #23272a;
`;
const TitleBar = styled.h2<{ $blue?: boolean }>`
  height: ${(p) => (p.$blue ? 9 : 10)}px;
  flex: none;
  display: flex;
  align-items: center;
  gap: 9px;
  padding: 0 3px 0 1px;
  color: ${(p) => (p.$blue ? "#1e3850" : "#a3a8ad")};
  background: ${(p) => (p.$blue ? "#6b9ecf" : "linear-gradient(#444b54, #333940)")};
  line-height: 9px;
`;
const TitleTools = styled.span`
  margin-left: auto;
  display: flex;
  gap: 4px;
`;
const FilterRow = styled.div`
  height: 22px;
  display: flex;
  align-items: center;
  padding: 0 12px 0 32px;
  color: #c9cccf;
`;
const FilterInput = styled.div`
  flex: 1;
  height: 13px;
  margin-left: 8px;
  display: flex;
  align-items: center;
  gap: 8px;
  padding: 0 3px 0 1px;
  background: #0f1113;
  input { flex: 1; min-width: 0; color: #b9bcbf; }
`;
const Clear = styled.button`
  width: 8px;
  height: 8px;
  border-radius: 50%;
  background: #e2e4e5;
  color: #15181a;
  display: flex;
  align-items: center;
  justify-content: center;
`;
const Check = styled.label`
  display: flex;
  align-items: center;
  gap: 4px;
  color: #9a9da1;
  input {
    appearance: none;
    width: 10px;
    height: 10px;
    display: grid;
    place-items: center;
    background: #3b3f43;
  }
  input:checked::after {
    content: "";
    width: 4px;
    height: 8px;
    margin-top: -3px;
    border: solid #fff;
    border-width: 0 2px 2px 0;
    transform: rotate(40deg);
  }
`;
const BrowserBody = styled.div`
  flex: 1;
  min-height: 0;
  display: flex;
  gap: 4px;
`;
const Rail = styled.nav`
  width: 22px;
  display: flex;
  flex-direction: column;
`;
const RailBtn = styled.button<{ $on?: boolean; $gap?: boolean }>`
  height: 16px;
  margin-top: ${(p) => (p.$gap ? 15 : 0)}px;
  display: grid;
  place-items: center;
  background: ${(p) => (p.$on ? "#76aee4" : "none")};
  color: ${(p) => (p.$on ? "#1b3854" : "#c4c7c9")};
`;
const TreeBox = styled.div`
  position: relative;
  flex: 1;
  height: 357px;
  margin-right: 4px;
  overflow: hidden;
  background: #323639;
  &::after {
    content: "";
    position: absolute;
    right: 0;
    top: 1px;
    width: 3px;
    height: 7px;
    background: #8a9099;
  }
`;
const Tree = styled.ul`
  height: 360px;
  margin-right: 3px;
  display: grid;
  grid-auto-rows: 1fr;
`;
const Item = styled.li<{ $pad: number; $on?: boolean; $dim?: boolean }>`
  display: flex;
  align-items: center;
  padding-left: ${(p) => p.$pad}px;
  color: ${(p) => (p.$on ? "#12222e" : p.$dim ? "#a2a5a7" : "#e6e8e9")};
  ${(p) => p.$on && css`background: linear-gradient(135deg, #d84848 3px, #abd4f3 3px);`}
  > svg:first-child { color: #9b9ea0; }
`;
const ItemText = styled.span<{ $ml: number }>`
  margin-left: ${(p) => p.$ml}px;
  white-space: nowrap;
`;
const FxBadge = styled.span`
  width: 10px;
  height: 10px;
  margin: 0 5px 0 3px;
  border-left: 1px solid #f0a90c;
  background: #5a4410;
  color: #fff6e0;
  font-weight: 700;
  text-align: center;
`;
const PresetBadge = styled.span`
  margin-left: 5px;
`;
const Bits = styled.span`
  margin-left: auto;
  padding-right: 29px;
  display: flex;
  align-items: center;
  gap: 9px;
  color: #a2a5a7;
  b { color: #f2f3f4; font-size: 9px; }
`;
const BrowserFoot = styled.div`
  height: 22px;
  display: flex;
  align-items: center;
  gap: 4px;
`;
const SplitBtn = styled.div`
  display: flex;
  gap: 1px;
  margin-right: 2px;
`;

type Node = ["dir" | "fx" | "preset", number, string, boolean?];
const tree: Node[] = [
  ["dir", 0, "Internal FX"],
  ["fx", 1, "Echo"],
  ["preset", 1, "Long reflections"],
  ["preset", 1, "Short reflections"],
  ["fx", 1, "Reverb"],
  ["preset", 1, "Vox: Early reflections"],
  ["fx", 1, "Stereo processor"],
  ["preset", 1, "Both channels = Left"],
  ["preset", 1, "Invert left && right phase"],
  ["preset", 1, "Invert left phase"],
  ["preset", 1, "Left +6dB"],
  ["preset", 1, "Left -6dB"],
  ["preset", 1, "Move centered sounds to left", true],
  ["preset", 1, "Only left"],
  ["preset", 1, "Side signal left"],
  ["dir", 0, "MAGIX Plugins"],
  ["dir", 1, "AM-Track_SE"],
  ["fx", 2, "AM-Track_SE", true],
  ["preset", 2, "Default"],
  ["dir", 1, "essentialFX"],
  ["fx", 2, "eFX_ChorusFlanger", true],
  ["preset", 2, "Acoustic Guitar"],
  ["preset", 2, "Chorus Classic Bass"],
  ["preset", 2, "Chorus Fx Any Direction"],
  ["preset", 2, "Chorus Vocal Spread"],
  ["preset", 2, "Default"],
  ["preset", 2, "Flanger Pad Enhancer"],
];

function TreeItem({ node: [kind, level, text, flag] }: { node: Node }) {
  if (kind === "dir")
    return (
      <Item $pad={4 + level * 5}>
        <Ico name="chevron" w={7} />
        <Ico name="dir" w={10} h={8} />
        <ItemText $ml={3}>{text}</ItemText>
      </Item>
    );
  if (kind === "fx")
    return (
      <Item $pad={5 + level * 5} $dim>
        <Ico name="chevron" w={7} />
        <FxBadge>FX</FxBadge>
        <Ico name="star" w={10} />
        <ItemText $ml={4}>{text}</ItemText>
        {flag && (
          <Bits>
            <b>64</b>
            <Ico name="vst" w={10} />
          </Bits>
        )}
      </Item>
    );
  return (
    <Item $pad={30 + level * 5} $on={flag}>
      <Ico name="star" w={10} />
      <PresetBadge><Ico name="preset" w={10} /></PresetBadge>
      <ItemText $ml={4}>{text}</ItemText>
    </Item>
  );
}

/* ---------- manager ---------- */

const Lower = styled.div`
  min-height: 148px;
  display: flex;
  gap: 2px;
  padding: 1px 0 3px;
  background: #0c0e10;
`;
const Manager = styled.section`
  flex: 0 0 510px;
  display: flex;
  flex-direction: column;
  background: #25282b;
`;
const Tabs = styled.nav`
  height: 16px;
  display: flex;
  gap: 1px;
  background: #1a1c1f;
`;
const Tab = styled.button<{ $w: number }>`
  width: ${(p) => p.$w}px;
  padding-right: 8px;
  background: #3a3d41;
  color: #b9bcbf;
`;
const TabTool = styled.button`
  flex: auto;
  display: flex;
  align-items: center;
  justify-content: center;
  background: #3a3d41;
  color: #b9bcbf;
`;
const TabMark = styled.span`
  width: 6px;
  background: #7cb5ea;
`;
const ManagerBody = styled.div`
  flex: 1;
  display: flex;
`;
const Modes = styled.nav`
  width: 41px;
  display: grid;
  grid-auto-rows: 1fr;
  gap: 1px;
  background: #111315;
`;
const Mode = styled.button<{ $on?: boolean }>`
  display: flex;
  flex-direction: column;
  align-items: center;
  justify-content: space-evenly;
  background: ${(p) => (p.$on ? "#7db5ea" : "#3d4044")};
  color: ${(p) => (p.$on ? "#17202a" : "#93979b")};
`;
const BlueBar = styled.span`
  width: 3px;
  flex: none;
  background: #73aee6;
`;
const Section = styled.div<{ $w: number }>`
  width: ${(p) => p.$w}px;
  display: flex;
  flex-direction: column;
  border-left: 1px solid #15171a;
`;
const SectionHead = styled.h2`
  height: 10px;
  display: flex;
  align-items: center;
  justify-content: space-between;
  padding: 0 12px 0 5px;
  background: #595f68;
  color: #22262a;
  line-height: 9px;
`;
const Lamp = styled.span`
  width: 11px;
  height: 6px;
  background: #8cc1f4;
  border: 1px solid #2c5f92;
`;
const Slots = styled.div`
  flex: 1;
  display: flex;
  flex-direction: column;
  justify-content: space-between;
  padding: 5px 12px 5px 14px;
`;
const Slot = styled.label<{ $on?: boolean }>`
  height: 12px;
  display: flex;
  gap: 1px;
  select {
    flex: 1;
    min-width: 0;
    appearance: none;
    padding-left: 3px;
    background: ${(p) => (p.$on ? "#7ab4ea" : "#3b3e42")};
    color: ${(p) => (p.$on ? "#15202b" : "#a9acaf")};
  }
  > span { width: 9px; display: grid; place-items: center; background: #3b3e42; }
`;
const SlotPair = styled.div`
  display: flex;
  gap: 3px;
  label:first-child { width: 50px; }
  label:last-child { flex: 1; }
  select { padding-left: 2px; }
`;
const Knobs = styled.div`
  flex: 1;
  display: flex;
  flex-direction: column;
  justify-content: space-between;
  padding: 4px 0;
`;
const GainKnobs = styled(Knobs)`
  flex: none;
  padding-bottom: 11px;
`;
const PanKnobs = styled(Knobs)`
  padding-top: 9px;
`;
const KnobRow = styled.label`
  position: relative;
  display: flex;
  align-items: center;
  padding-left: 6px;
  input { position: absolute; inset: 0 auto 0 7px; width: 20px; opacity: 0; }
  output {
    height: 19px;
    flex: 1;
    margin: 0 10px 0 0;
    padding-left: 7px;
    display: flex;
    align-items: center;
    background: #131517;
    color: #a8abae;
    line-height: 9px;
    white-space: pre;
  }
`;
function Knob({ label, value, turn = 0, mark = "#2d3338" }: { label: string; value: string; turn?: number; mark?: string }) {
  return (
    <KnobRow>
      <svg width="22" height="22" viewBox="0 0 22 22" aria-hidden="true">
        <circle cx="11" cy="11" r="10.500" fill="#17191b" />
        <circle cx="11" cy="11" r="8.500" fill="#8f9499" />
        <circle cx="10.500" cy="10" r="6.500" fill="#b3b7bb" />
        <path d="M11 11V3" stroke={mark} strokeWidth="1.500" transform={`rotate(${turn} 11 11)`} />
      </svg>
      <input type="range" aria-label={label} />
      <output>{value}</output>
    </KnobRow>
  );
}
const VolBody = styled.div`
  flex: 1;
  display: flex;
  flex-direction: column;
  align-items: center;
  gap: 3px;
  padding: 6px 4px 5px 0;
`;
const Fader = styled.input`
  appearance: none;
  writing-mode: vertical-lr;
  direction: rtl;
  width: 13px;
  height: 65px;
  margin-bottom: auto;
  background: linear-gradient(90deg, transparent 5px, #0c0e10 5px, #0c0e10 8px, transparent 8px);
  &::-webkit-slider-thumb {
    appearance: none;
    width: 13px;
    height: 25px;
    background: linear-gradient(#d5d7d9, #8f9397 46%, #1a1c1e 47%, #1a1c1e 51%, #8f9397 52%, #e8e9ea);
  }
`;
const VolValue = styled.output`
  width: 27px;
  height: 12px;
  padding-left: 3px;
  background: #0f1113;
  color: #a8abae;
  line-height: 12px;
`;
const ObjectCol = styled.div`
  flex: 1;
  display: flex;
  flex-direction: column;
  background: #303336;
  color: #a3a6a9;
`;
const ObjectName = styled.div`
  height: 12px;
  padding-left: 3px;
  display: flex;
  align-items: center;
  justify-content: space-between;
  background: #0f1113;
  &::after { content: ""; width: 8px; height: 11px; background: #9cc9f2; border: solid #7ec62e; border-width: 0 1px 1px 0; }
`;
const ButtonRow = styled.div`
  display: flex;
  gap: 1px;
  padding: 4px 5px 0 4px;
`;
const Gap = styled.span<{ $w?: number }>`
  ${(p) => (p.$w ? css`width: ${p.$w}px; flex: none;` : css`flex: 1;`)}
`;
const Options = styled.div`
  display: flex;
  justify-content: space-between;
  align-items: center;
  padding: 4px 5px 0 4px;
`;
const OptionList = styled.div`
  display: grid;
  gap: 3px;
  label { gap: 5px; }
  input { width: 8px; height: 8px; background: #15171a; border: 1px solid #0b0c0e; margin: 1px 0; }
  input:checked { background: #a9d3f5; }
  input:checked::after { width: 3px; height: 6px; margin-top: -2px; border-color: #1b3148; border-width: 0 1px 1px 0; }
`;
const PlayBtn = styled.button`
  width: 21px;
  height: 20px;
  display: grid;
  place-items: center;
  background: #73ace0;
`;
const NoteHead = styled.div`
  flex: 1;
  display: flex;
  align-items: flex-end;
  padding: 0 5px 4px 3px;
  gap: 1px;
  label { margin: 0 auto -4px 0; }
`;
const Notes = styled.textarea`
  height: 32px;
  resize: none;
  background: #121416;
`;

/* ---------- sample editor ---------- */

const Editor = styled.section`
  flex: 1;
  min-width: 0;
  display: flex;
  flex-direction: column;
  background: #202326;
`;
const EditorBody = styled.div`
  flex: 1;
  display: flex;
`;
const WaveCanvas = styled.div`
  flex: 1;
  background: #191e28;
  svg { width: 100%; height: 89px; }
`;
const SKYWAVE = "#76bbf1";
const sample: Blob[] = (
  [
    [8, 24, 3, "", "n"], [22, 39, 7], [70, 112, 8.5, "", "d"], [113, 140, 4.5, "", "n"], [138, 166, 5.2], [160, 232, 4.8, "", "n"], [228, 285, 5.4, "", "n"],
    [160, 285, 3.4, "", "b"], [113, 160, 3, "", "b"], [300, 316, 6], [327, 437, 3.8, "", "b"], [327, 400, 5.6, "", "n"], [396, 414, 7], [410, 438, 5.6, "", "n"],
    [437, 514, 3, "", "b"], [437, 514, 4.8, "", "n"], [528, 544, 6], [558, 670, 7, "", "d"], [675, 712, 2.6], [735, 760, 0.8, "", "b"],
    [836, 850, 5], [848, 863, 4.5], [869, 884, 7.5], [892, 909, 6], [951, 964, 7], [963, 980, 5.6], [985, 1000, 4.6], [1007, 1024, 6.6],
    [1064, 1081, 5.6], [1077, 1094, 5], [1099, 1114, 5.6], [1120, 1136, 3.8], [1178, 1192, 7.6], [1192, 1210, 5.6], [1215, 1230, 6], [1236, 1252, 6],
    [1284, 1299, 5], [1295, 1313, 4.5], [1318, 1333, 4.5], [1341, 1388, 4.2, "", "n"], [1341, 1385, 2.8, "", "b"], [1380, 1406, 6], [1409, 1428, 6],
    [1433, 1455, 6.8, "", "n"], [1436, 1524, 3.6, "", "b"], [1450, 1527, 5.6, "", "n"], [1540, 1543, 3],
  ] as Blob[]
).map(([a, b, amp, , s]) => [a, b, amp, SKYWAVE, s] as Blob);

/* ---------- meters ---------- */

const Meters = styled.section`
  background: #000;
`;
const MeterSvg = styled.svg`
  width: 100%;
  height: 47px;
  background: #000;
  font: 7px ${ARIAL};
  fill: #b6b9bb;
`;
const mx = (v: number) => `${((v / 1280) * 100).toFixed(2)}%`;
const scale: [number, string][] = [
  [25, "-60"], [60, "-50"], [145, "-40"], [214, "-35"], [301, "-30"], [403, "-25"], [516, "-20"], [636, "-15"], [761, "-10"], [887, "-5"], [1017, "0"], [1147, "5"], [1252, "9"],
];
const subTicks = [540, 564, 588, 612, 661, 686, 711, 736, 786, 811, 837, 862, 913, 939, 965, 991];

function Meter() {
  const bars: [number, number, number, number][] = [
    [6, 3, 786, 974],
    [12, 8, 661, 803],
    [29, 8, 661, 791],
    [38, 4, 787, 970],
  ];
  return (
    <MeterSvg role="img" aria-label="Peak meter">
      <defs>
        <linearGradient id="g" gradientUnits="userSpaceOnUse" x1="0" x2="800" y1="0" y2="0">
          <stop offset="0" stopColor="#193f03" />
          <stop offset="1" stopColor="#2c6c06" />
        </linearGradient>
      </defs>
      {bars.map(([y, h, a, b]) => (
        <g key={y}>
          <rect x={mx(13)} y={y} width={mx(a - 13)} height={h} fill="url(#g)" />
          <rect x={mx(a)} y={y} width={mx(b - a)} height={h} fill="#dc9c1e" />
        </g>
      ))}
      <g stroke="#7a5b10" fill="none">
        <line x1={mx(974)} x2={mx(1017)} y1="6.500" y2="6.500" />
        <line x1={mx(970)} x2={mx(1017)} y1="42.500" y2="42.500" />
      </g>
      <g stroke="#e0a21c">
        <line x1={mx(1016)} x2={mx(1016)} y1="6" y2="20" />
        <line x1={mx(1016)} x2={mx(1016)} y1="29" y2="42" />
      </g>
      <g stroke="#9a1d16">
        <line x1={mx(1017)} x2={mx(1252)} y1="6.500" y2="6.500" />
        <line x1={mx(1017)} x2={mx(1252)} y1="42.500" y2="42.500" />
        <line x1={mx(1252)} x2={mx(1252)} y1="6" y2="20" />
        <line x1={mx(1252)} x2={mx(1252)} y1="29" y2="42" />
      </g>
      {subTicks.map((x) => (
        <g key={x} stroke="#a9c08c" strokeOpacity="0.6">
          <line x1={mx(x)} x2={mx(x)} y1="6" y2="9" />
          <line x1={mx(x)} x2={mx(x)} y1="38" y2="41" />
        </g>
      ))}
      {scale.map(([x, t]) => (
        <g key={t}>
          <g stroke="#a9c08c" strokeOpacity="0.6">
            <line x1={mx(x)} x2={mx(x)} y1="6" y2={x > 600 ? 12 : 19} />
            <line x1={mx(x)} x2={mx(x)} y1={x > 600 ? 36 : 29} y2="42" />
          </g>
          <text x={mx(x)} y="27" textAnchor="middle">{t}</text>
        </g>
      ))}
      <path d="M4 4h6l-3 5z" fill="#e8eaeb" />
      <text x="4" y="17">L</text>
      <text x="3" y="38">R</text>
      <text x={mx(1268)} y="12">-0.1</text>
      <text x={mx(1268)} y="36">-0.1</text>
    </MeterSvg>
  );
}

const BottomBar = styled(Toolbar)`
  height: 19px;
  padding-left: 3px;
`;
const WorkLabel = styled.span`
  width: 42px;
`;

/* ---------- page ---------- */

const Tool = ({ name, w = 14, on, label }: { name: string; w?: number; on?: boolean; label?: string }) => (
  <ToolButton $on={on} aria-label={label ?? name}>
    <Ico name={name} w={w} />
  </ToolButton>
);
const Drop = () => (
  <ToolButton $narrow aria-label="More">
    <SmallCaret />
  </ToolButton>
);
const VerticalZoom = () => (
  <VZoom>
    <Ico name="plus" w={7} />
    <Ico name="minus" w={7} />
  </VZoom>
);

const ticks = (from: number, to: number, step: number, parts: number) => {
  const out: React.ReactNode[] = [];
  for (let n = from; n <= to; n += step) out.push(<Tick key={n} style={{ width: `${100 / parts}%` }}>{n}</Tick>);
  return out;
};

export default function App() {
  return (
    <Page>
      <Global />
      <Toolbar>
        <Tool name="file" w={13} /><Tool name="folder" w={13} /><Tool name="folderRev" w={13} /><Tool name="save" w={13} /><Drop />
        <Sep $blank />
        <Tool name="track" /><Drop /><Tool name="bar" w={15} /><Drop />
        <Sep />
        <Tool name="cross" w={13} /><Tool name="crossCut" w={13} /><Tool name="linesO" w={12} /><Tool name="linesB" w={12} />
        <Sep />
        <Tool name="undo" /><Drop /><Tool name="redo" /><Drop />
        <Sep />
        <Tool name="metro" />
        <Sep />
        <Tool name="magnet" w={15} on />
        <Combo $w={88}>
          <Ico name="hash" w={11} />
          <select aria-label="Grid"><option>Full bar</option></select>
          <Caret />
        </Combo>
        <Gap $w={5} />
        <Combo $w={78}>
          <Big>Q</Big>
          <select aria-label="Quantize"><option>1/16</option></select>
          <Caret />
        </Combo>
        <SearchBox placeholder="Search" aria-label="Search" />
        <Tool name="search" label="Find" />
      </Toolbar>

      <Main>
        <Arranger>
          <ProjectTabs>
            <ProjectTab>Music Studio Demo - You Are.VIP* <Ico name="close" w={7} /></ProjectTab>
            <Square aria-label="New tab" $h={14} $w={14}><Ico name="plus" w={8} /></Square>
          </ProjectTabs>
          <ArrangerBody>
            <TrackColumn>
              <TrackTop>
                <Square aria-label="Mixer"><Ico name="mixer" w={10} /></Square>
                <Gap $w={1} />
                <Square><Big>S</Big></Square>
                <Square><Big>M</Big></Square>
                <TopMenus>
                  <Ico name="lock" w={7} /><Caret /><SmallCaret />
                  <span /><Ico name="hash" w={7} /><SmallCaret />
                </TopMenus>
              </TrackTop>
              <TrackGrid>
                {lanes.map((l, i) => <TrackRow key={l.name} lane={l} index={i} />)}
              </TrackGrid>
              <TrackFooter>
                <PageSet>
                  <div>{[1, 2, 3, 4].map((n) => <PageBtn key={n} $w={11}>{n}</PageBtn>)}</div>
                  setup
                </PageSet>
                <PageSet>
                  <div>{[1, 2, 3, 4].map((n) => <PageBtn key={n} $w={11} $on={n === 2}>{n}</PageBtn>)}</div>
                  zoom
                </PageSet>
              </TrackFooter>
            </TrackColumn>
            <Timeline>
              <Ruler $bg="linear-gradient(#33393d 8px, #46505a 8px)">
                {ticks(29, 57, 2, 14.6)}
                <Marker $c="#ffe60a" style={{ left: pct(480) }} />
                <Marker $c="#22b8f2" style={{ left: pct(551) }} />
              </Ruler>
              <Lanes>
                {lanes.map((l, i) => <LaneRow key={l.name} lane={l} index={i} />)}
                <Playhead $w={1} $c="#85898e" style={{ left: pct(483) }} />
                <Playhead $w={2} $c="#e9ebec" style={{ left: pct(554) }} />
              </Lanes>
              <ScrollRow>
                <Thumb $ml="31.6%" $w="32.800%">00:00:58:12</Thumb>
                <Push $gap={6} $pr={2}><Ico name="plus" w={7} /><Ico name="minus" w={7} /></Push>
              </ScrollRow>
              <StatusRow>
                <Field $w={71}><span>Pos</span><span>048:03:060</span></Field>
                <Field $w={71}>Len</Field>
                <Field $w={70}>End</Field>
                <Push $gap={11}><Bracket /><Ico name="fitH" w={12} h={10} /><Ico name="fitV" w={12} h={10} /></Push>
              </StatusRow>
            </Timeline>
            <VScroll $top={20}>
              <VThumb $h={113} />
              <VerticalZoom />
            </VScroll>
          </ArrangerBody>
        </Arranger>

        <Browser>
          <TitleBar $blue>
            <Ico name="grip" w={7} />Plug-ins
            <TitleTools><Ico name="close" w={6} /></TitleTools>
          </TitleBar>
          <FilterRow>
            <Ico name="sliders" w={10} />
            <Gap $w={14} />
            <Big>FX</Big>
            <FilterInput>
              <input defaultValue="ef" aria-label="Filter plug-ins" />
              <Clear aria-label="Clear"><Ico name="close" w={5} /></Clear>
              <Ico name="preset" w={10} />
            </FilterInput>
            <Gap $w={6} />
            <Check><input type="checkbox" defaultChecked />Presets</Check>
          </FilterRow>
          <BrowserBody>
            <Rail>
              <RailBtn $on aria-label="Computer"><Ico name="laptop" w={12} /></RailBtn>
              <RailBtn aria-label="Categories"><Ico name="cubes" w={12} /></RailBtn>
              <RailBtn aria-label="Vendors"><Ico name="factory" w={12} /></RailBtn>
              <RailBtn $gap aria-label="Recent"><Ico name="clock" w={12} /></RailBtn>
              <RailBtn aria-label="Favourites"><Ico name="starO" w={12} /></RailBtn>
            </Rail>
            <TreeBox>
              <Tree>{tree.map((n, i) => <TreeItem key={i} node={n} />)}</Tree>
            </TreeBox>
          </BrowserBody>
          <BrowserFoot>
            <Square $w={22} aria-label="Settings"><Ico name="gear" w={9} /><Gap $w={2} /><SmallCaret /></Square>
            <SplitBtn>
              <Square $w={57} $c="#6d7175">Add</Square>
              <Square $w={9} aria-label="Add options"><SmallCaret /></Square>
            </SplitBtn>
            <Check><input type="checkbox" defaultChecked />Show Plugin</Check>
          </BrowserFoot>
        </Browser>
      </Main>

      <Lower>
        <Manager>
          <TitleBar>
            <Ico name="grip" w={7} />
            <TitleTools><Ico name="minus" w={6} /><Ico name="close" w={6} /></TitleTools>
          </TitleBar>
          <Tabs>
            <TabTool aria-label="Scroll left"><Ico name="less" w={8} /></TabTool>
            <Tab $w={65}>Soundpool</Tab>
            <Tab $w={72}>Time Display</Tab>
            <Tab $w={54}>Objects</Tab>
            <Tab $w={49}>Tracks</Tab>
            <Tab $w={56}>Markers</Tab>
            <Tab $w={42}>VSTi</Tab>
            <Tab $w={67}>MIDI Editor</Tab>
            <Tab $w={43}>Files</Tab>
            <TabMark />
            <TabTool aria-label="Scroll right"><Ico name="more" w={8} /></TabTool>
            <TabTool aria-label="Add tab"><Ico name="plus" w={8} /></TabTool>
          </Tabs>
          <ManagerBody>
            <Modes>
              <Mode $on><Ico name="fxKnob" w={13} />FX</Mode>
              <Mode>
                <svg width="27" height="8" viewBox="0 0 27 8" aria-hidden="true">
                  <path d="M0 4l4-4v3h3v2H4v3zM27 4l-4-4v3h-3v2h3v3z" fill="#e2e5e7" />
                  <path d="M8 1h11v6H8z" fill="#2f9be6" />
                </svg>
                Position
              </Mode>
              <Mode><Ico name="pitch" w={14} />Time/Pitch</Mode>
            </Modes>
            <BlueBar />
            <Section $w={103}>
              <SectionHead>Plug-ins<Lamp /></SectionHead>
              <Slots>
                <Slot $on><select aria-label="Slot 1"><option>DYNAMIC EQ</option></select><span><SmallCaret /></span></Slot>
                {[2, 3, 4, 5].map((n) => (
                  <Slot key={n}><select aria-label={`Slot ${n}`}><option></option></select><span><SmallCaret /></span></Slot>
                ))}
                <SlotPair>
                  <Slot><select aria-label="Offline effects"><option>Offline FX</option></select><span><SmallCaret /></span></Slot>
                  <Slot><select aria-label="Effects"><option>FX</option></select><span><SmallCaret /></span></Slot>
                </SlotPair>
              </Slots>
            </Section>
            <Section $w={71}>
              <SectionHead>EQ<Lamp /></SectionHead>
              <Knobs>
                <Knob label="High" value={"13.5k\nHigh"} />
                <Knob label="Mid high" value={"2.5k\n-2.0"} turn={-14} mark="#1fc24b" />
                <Knob label="Mid low" value={"1.0k\nML"} />
                <Knob label="Low" value={"100.0\nLow"} />
              </Knobs>
            </Section>
            <Section $w={87}>
              <SectionHead>Gain</SectionHead>
              <GainKnobs><Knob label="Gain" value="0.00" /></GainKnobs>
              <SectionHead>Pan</SectionHead>
              <PanKnobs><Knob label="Pan" value="0.0" /><Knob label="Width" value="Stereo" /></PanKnobs>
            </Section>
            <Section $w={49}>
              <SectionHead>Vol</SectionHead>
              <VolBody>
                <Fader type="range" aria-label="Volume" defaultValue={72} />
                <VolValue>0.00</VolValue>
                <Square $w={26} $h={11} $c="#a9acaf">Norm.</Square>
              </VolBody>
            </Section>
            <BlueBar />
            <ObjectCol>
              <ObjectName>Rh Guitar 02</ObjectName>
              <ButtonRow>
                <Square aria-label="Up"><Ico name="up" w={9} /></Square>
                <Square aria-label="Down"><Ico name="down" w={9} /></Square>
                <Gap $w={5} />
                <Square aria-label="Left"><Ico name="left" w={11} /></Square>
                <Square aria-label="Right"><Ico name="right" w={11} /></Square>
                <Gap />
                {[1, 2, 3, 4].map((n) => <Square key={n}>{n}</Square>)}
              </ButtonRow>
              <Options>
                <OptionList>
                  <Check><input type="checkbox" defaultChecked />Apply to all</Check>
                  <Check><input type="checkbox" />Bypass FX</Check>
                  <Check><input type="checkbox" />Freeze</Check>
                </OptionList>
                <PlayBtn aria-label="Play"><Ico name="play" w={12} /></PlayBtn>
              </Options>
              <NoteHead>
                <label htmlFor="notes">Comments:</label>
                <Square><Big>φ</Big></Square>
                <Square aria-label="Lock"><Ico name="lock" w={10} /></Square>
                <Gap $w={6} />
                <Square><Big>S</Big></Square>
                <Square><Big>M</Big></Square>
              </NoteHead>
              <Notes id="notes" />
            </ObjectCol>
          </ManagerBody>
        </Manager>

        <Editor>
          <TitleBar>
            <Ico name="grip" w={7} />2_31_M24.ogg
            <TitleTools><Ico name="minus" w={6} /><Ico name="close" w={6} /></TitleTools>
          </TitleBar>
          <EditorBody>
            <Timeline>
              <Ruler $bg="#2c3034">{ticks(1, 14, 1, 13.39)}</Ruler>
              <WaveCanvas>
                <svg viewBox="8 0 1535 89" preserveAspectRatio="none" role="img" aria-label="Waveform">
                  <path d="M8 22.500H1543M8 67.500H1543" stroke="#9a9da2" strokeWidth="0.700" />
                  <Waves blobs={sample} centres={[22.5, 67.5]} step={2.5} />
                  <path d="M113 0V89M803 0V89" stroke="#c3c6c9" strokeWidth="2" />
                </svg>
              </WaveCanvas>
              <ScrollRow>
                <Thumb $w="96.300%">00:00:26:18</Thumb>
                <Push $gap={6} $pr={2}><Ico name="plus" w={7} /><Ico name="minus" w={7} /></Push>
              </ScrollRow>
              <StatusRow>
                <Push as="b" $gap={7} $pr={0} style={{ marginLeft: 3 }}><span>L</span><span>R</span></Push>
                <Field $w={70}><span>Pos</span><span>001:04:253</span></Field>
                <Field $w={70}><span>Len</span><span>006:00:018</span></Field>
                <Field $w={70}><span>End</span><span>007:04:272</span></Field>
                <Push $gap={11}><Bracket /><Ico name="fitH" w={12} h={10} /><Ico name="fitV" w={12} h={10} /></Push>
              </StatusRow>
            </Timeline>
            <VScroll $top={20}>
              <VThumb $h={62} />
              <VerticalZoom />
            </VScroll>
          </EditorBody>
        </Editor>
      </Lower>

      <Meters>
        <TitleBar>
          <Ico name="grip" w={7} />Visualization
          <TitleTools><Ico name="minus" w={6} /><Ico name="close" w={6} /></TitleTools>
        </TitleBar>
        <Meter />
      </Meters>

      <BottomBar as="footer">
        <WorkLabel>Workspace:</WorkLabel>
        <Combo $w={112} $flat>
          <select aria-label="Workspace"><option>Default</option></select>
          <Caret />
        </Combo>
        <Gap $w={11} />
        <Tool name="wsA" w={13} /><Gap $w={4} /><Tool name="wsB" w={12} /><Tool name="wsC" />
        <Sep />
        <Tool name="prev" /><Tool name="next" /><Tool name="prevOff" /><Tool name="nextOff" />
        <Sep />
        <Tool name="eyeR" w={13} /><Tool name="eyeB" w={13} /><Tool name="eyeRG" w={13} /><Tool name="eyeBG" w={13} />
        <Sep />
        <Tool name="zoomIn" /><Tool name="zoomOut" /><Tool name="rows" /><Tool name="wsOn" on />
      </BottomBar>
    </Page>
  );
}
